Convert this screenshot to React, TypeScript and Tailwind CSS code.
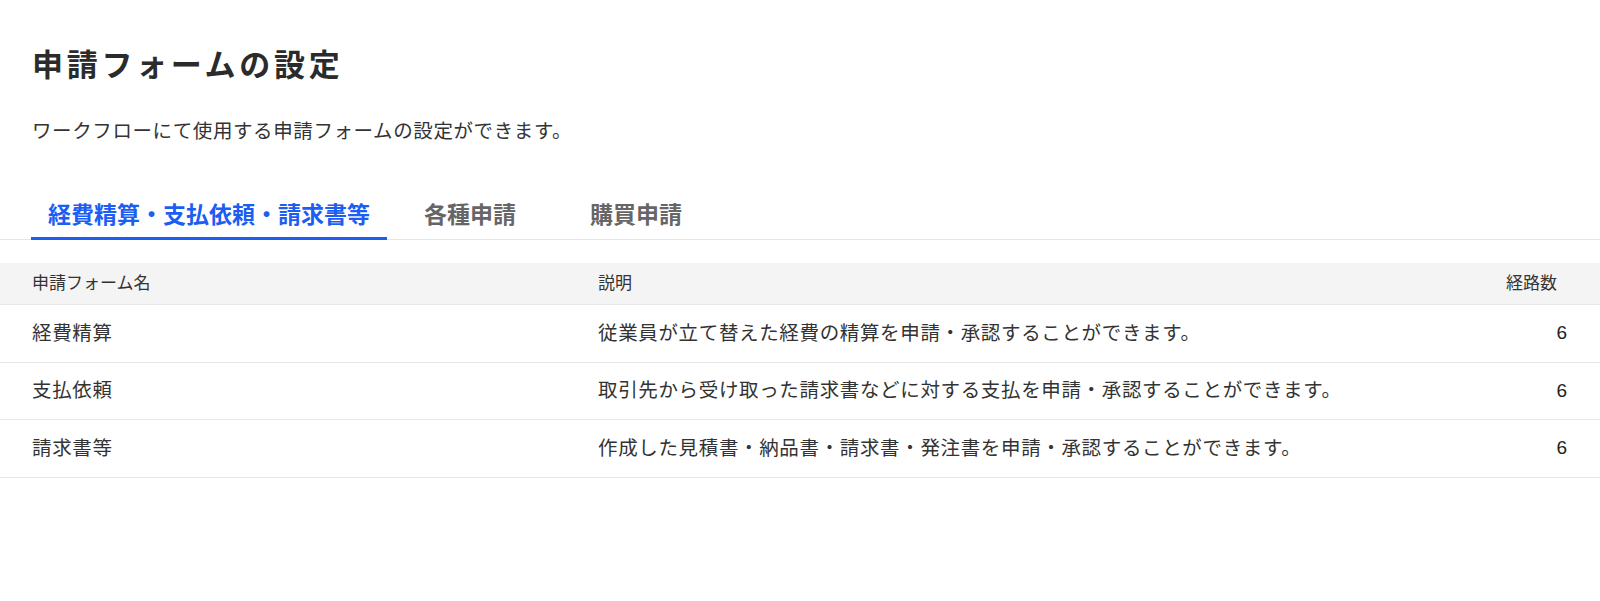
export default function App() {
  const rows = [
    { name: "経費精算", desc: "従業員が立て替えた経費の精算を申請・承認することができます。", count: 6 },
    { name: "支払依頼", desc: "取引先から受け取った請求書などに対する支払を申請・承認することができます。", count: 6 },
    { name: "請求書等", desc: "作成した見積書・納品書・請求書・発注書を申請・承認することができます。", count: 6 },
  ];
  return (
    <div className="min-h-[601px] bg-white text-[#333] font-['Liberation_Sans','Noto_Sans_CJK_JP',sans-serif]">
      <div className="px-[32px]">
        <h1 className="pt-[43px] text-[31px] leading-[46px] font-bold tracking-[3.7px] text-[#2b2b2b]">申請フォームの設定</h1>
        <p className="mt-[27px] text-[19.5px] leading-[30px] tracking-[0.6px]">ワークフローにて使用する申請フォームの設定ができます。</p>
      </div>
      <div className="mt-[34px] flex border-b border-[#e6e6e6] pl-[31px]">
        <div className="-mb-px border-b-[3px] border-[#1c5df2] px-[17px] pt-[18px] pb-[5px] text-[23px] leading-[34px] font-bold text-[#1c5df2]">
          経費精算・支払依頼・請求書等
        </div>
        <div className="-mb-px w-[166px] border-b-[3px] border-transparent pt-[18px] pb-[5px] text-center text-[23px] leading-[34px] font-bold text-[#666]">
          各種申請
        </div>
        <div className="-mb-px w-[166px] border-b-[3px] border-transparent pt-[18px] pb-[5px] text-center text-[23px] leading-[34px] font-bold text-[#666]">
          購買申請
        </div>
      </div>
      <div className="mt-[23px]">
        <div className="grid h-[42px] grid-cols-[566px_1fr_auto] items-center border-b border-[#e8e8e8] bg-[#f5f4f5] pl-[32px] pr-[43px] text-[17px]">
          <div>申請フォーム名</div>
          <div>説明</div>
          <div>経路数</div>
        </div>
        {rows.map((r) => (
          <div
            key={r.name}
            className="grid h-[57.5px] grid-cols-[566px_1fr_auto] items-center border-b border-[#e8e8e8] pl-[32px] pr-[33px] text-[19.5px] tracking-[0.65px]"
          >
            <div>{r.name}</div>
            <div>{r.desc}</div>
            <div className="text-right text-[19px] tracking-normal text-[#222]">{r.count}</div>
          </div>
        ))}
      </div>
    </div>
  );
}
